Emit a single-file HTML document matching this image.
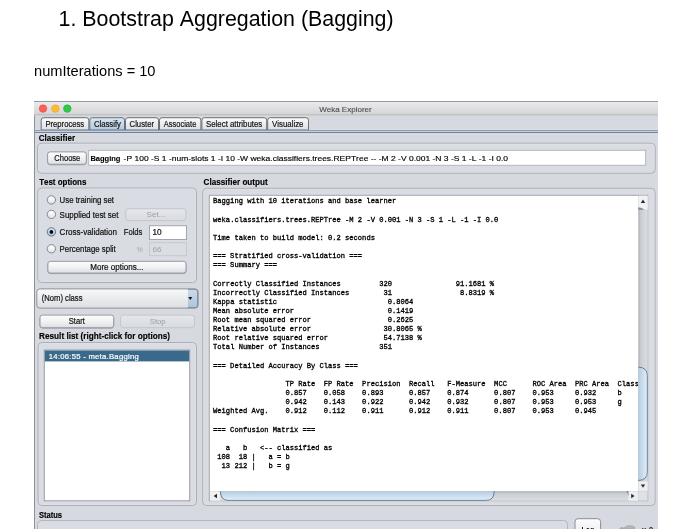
<!DOCTYPE html>
<html><head><meta charset="utf-8"><title>Bagging</title>
<style>html,body{margin:0;padding:0;background:#fff;width:690px;height:529px;overflow:hidden}</style>
</head><body>
<svg width="690" height="529" viewBox="0 0 690 529" style="display:block;will-change:transform;font-variant-ligatures:none;font-kerning:none"><defs>
<linearGradient id="gTitle" x1="0" y1="0" x2="0" y2="1"><stop offset="0" stop-color="#ececec"/><stop offset="1" stop-color="#d3d3d3"/></linearGradient>
<linearGradient id="gTab" x1="0" y1="0" x2="0" y2="1"><stop offset="0" stop-color="#fbfbfb"/><stop offset="1" stop-color="#dedfe2"/></linearGradient>
<linearGradient id="gTabSel" x1="0" y1="0" x2="0" y2="1"><stop offset="0" stop-color="#dbe6f0"/><stop offset="1" stop-color="#b5c9dc"/></linearGradient>
<linearGradient id="gBtn" x1="0" y1="0" x2="0" y2="1"><stop offset="0" stop-color="#fdfdfd"/><stop offset="0.5" stop-color="#f1f2f4"/><stop offset="1" stop-color="#dcdee2"/></linearGradient>
<linearGradient id="gBtnDis" x1="0" y1="0" x2="0" y2="1"><stop offset="0" stop-color="#e4e6ea"/><stop offset="1" stop-color="#d8dbe0"/></linearGradient>
<linearGradient id="gCombo" x1="0" y1="0" x2="0" y2="1"><stop offset="0" stop-color="#f9f9fa"/><stop offset="1" stop-color="#dcdee3"/></linearGradient>
<linearGradient id="gComboBtn" x1="0" y1="0" x2="0" y2="1"><stop offset="0" stop-color="#cbdbea"/><stop offset="1" stop-color="#adc4da"/></linearGradient>
<linearGradient id="gBlueLine" x1="0" y1="0" x2="0" y2="1"><stop offset="0" stop-color="#b8cadb"/><stop offset="0.45" stop-color="#a2b6ca"/><stop offset="0.6" stop-color="#7d90a5"/><stop offset="1" stop-color="#6b7d92"/></linearGradient>
<linearGradient id="gVTrack" x1="0" y1="0" x2="1" y2="0"><stop offset="0" stop-color="#a9acb2"/><stop offset="0.25" stop-color="#c9ccd1"/><stop offset="1" stop-color="#dcdee2"/></linearGradient>
<linearGradient id="gHTrack" x1="0" y1="0" x2="0" y2="1"><stop offset="0" stop-color="#a9acb2"/><stop offset="0.25" stop-color="#c9ccd1"/><stop offset="1" stop-color="#dcdee2"/></linearGradient>
<linearGradient id="gVThumb" x1="0" y1="0" x2="1" y2="0"><stop offset="0" stop-color="#b4cbe1"/><stop offset="1" stop-color="#e3f1fa"/></linearGradient>
<linearGradient id="gHThumb" x1="0" y1="0" x2="0" y2="1"><stop offset="0" stop-color="#b4cbe1"/><stop offset="1" stop-color="#e3f1fa"/></linearGradient>
<radialGradient id="gRadio" cx="0.5" cy="0.3" r="0.7"><stop offset="0" stop-color="#ffffff"/><stop offset="1" stop-color="#dcdee2"/></radialGradient>
<radialGradient id="gRadioSel" cx="0.5" cy="0.3" r="0.7"><stop offset="0" stop-color="#e6eff7"/><stop offset="1" stop-color="#9fb8d0"/></radialGradient>
</defs><text x="58.6" y="25.9" font-family="Liberation Sans" font-size="21.4" font-weight="normal" fill="#000" textLength="335.00" lengthAdjust="spacingAndGlyphs" style="font-variant-ligatures:none" >1. Bootstrap Aggregation (Bagging)</text>
<text x="34.0" y="75.9" font-family="Liberation Sans" font-size="14.6" font-weight="normal" fill="#000" textLength="121.50" lengthAdjust="spacingAndGlyphs" style="font-variant-ligatures:none" >numIterations = 10</text>
<rect x="34" y="101" width="624" height="428" rx="0" fill="#d6d9df" />
<line x1="34.5" y1="101" x2="34.5" y2="529" stroke="#8d9096" stroke-width="1"/>
<rect x="34" y="101" width="624" height="14.3" rx="0" fill="url(#gTitle)" />
<line x1="34" y1="101.5" x2="658" y2="101.5" stroke="#8e9bab" stroke-width="1"/>
<line x1="34" y1="114.8" x2="658" y2="114.8" stroke="#b9bbbf" stroke-width="1"/>
<circle cx="43" cy="108.6" r="3.8" fill="#fc5f57" stroke="#e0443e" stroke-width="0.5"/>
<circle cx="55.4" cy="108.6" r="3.8" fill="#fdbb2f" stroke="#dea123" stroke-width="0.5"/>
<circle cx="67.3" cy="108.6" r="3.8" fill="#33c748" stroke="#1aab29" stroke-width="0.5"/>
<text x="319.2" y="111.9" font-family="Liberation Sans" font-size="8.0" font-weight="normal" fill="#4a4a4a" textLength="52.50" lengthAdjust="spacingAndGlyphs" style="font-variant-ligatures:none" stroke="#4a4a4a" stroke-width="0.1">Weka Explorer</text>
<rect x="35" y="129" width="623" height="1" rx="0" fill="#dcdee2" />
<path d="M41.2,130 L41.2,120.2 Q41.2,117.7 43.7,117.7 L86.3,117.7 Q88.8,117.7 88.8,120.2 L88.8,130 Z" fill="url(#gTab)" stroke="#6c6f75" stroke-width="1"/>
<text x="45.400000000000006" y="127.0" font-family="Liberation Sans" font-size="8.4" font-weight="normal" fill="#111" textLength="38.80" lengthAdjust="spacingAndGlyphs" style="font-variant-ligatures:none" stroke="#111" stroke-width="0.18">Preprocess</text>
<path d="M89.8,130 L89.8,120.2 Q89.8,117.7 92.3,117.7 L122.0,117.7 Q124.5,117.7 124.5,120.2 L124.5,130 Z" fill="url(#gTabSel)" stroke="#5f7388" stroke-width="1"/>
<text x="93.9" y="127.0" font-family="Liberation Sans" font-size="8.4" font-weight="normal" fill="#111" textLength="27.10" lengthAdjust="spacingAndGlyphs" style="font-variant-ligatures:none" stroke="#111" stroke-width="0.18">Classify</text>
<path d="M125.5,130 L125.5,120.2 Q125.5,117.7 128.0,117.7 L156.0,117.7 Q158.5,117.7 158.5,120.2 L158.5,130 Z" fill="url(#gTab)" stroke="#6c6f75" stroke-width="1"/>
<text x="129.6" y="127.0" font-family="Liberation Sans" font-size="8.4" font-weight="normal" fill="#111" textLength="24.40" lengthAdjust="spacingAndGlyphs" style="font-variant-ligatures:none" stroke="#111" stroke-width="0.18">Cluster</text>
<path d="M159.5,130 L159.5,120.2 Q159.5,117.7 162.0,117.7 L198.4,117.7 Q200.9,117.7 200.9,120.2 L200.9,130 Z" fill="url(#gTab)" stroke="#6c6f75" stroke-width="1"/>
<text x="163.79999999999998" y="127.0" font-family="Liberation Sans" font-size="8.4" font-weight="normal" fill="#111" textLength="32.50" lengthAdjust="spacingAndGlyphs" style="font-variant-ligatures:none" stroke="#111" stroke-width="0.18">Associate</text>
<path d="M201.9,130 L201.9,120.2 Q201.9,117.7 204.4,117.7 L264.2,117.7 Q266.7,117.7 266.7,120.2 L266.7,130 Z" fill="url(#gTab)" stroke="#6c6f75" stroke-width="1"/>
<text x="206.0" y="127.0" font-family="Liberation Sans" font-size="8.4" font-weight="normal" fill="#111" textLength="56.30" lengthAdjust="spacingAndGlyphs" style="font-variant-ligatures:none" stroke="#111" stroke-width="0.18">Select attributes</text>
<path d="M267.7,130 L267.7,120.2 Q267.7,117.7 270.2,117.7 L306.0,117.7 Q308.5,117.7 308.5,120.2 L308.5,130 Z" fill="url(#gTab)" stroke="#6c6f75" stroke-width="1"/>
<text x="272.09999999999997" y="127.0" font-family="Liberation Sans" font-size="8.4" font-weight="normal" fill="#111" textLength="31.40" lengthAdjust="spacingAndGlyphs" style="font-variant-ligatures:none" stroke="#111" stroke-width="0.18">Visualize</text>
<rect x="35" y="130" width="623" height="1" rx="0" fill="#8f9daf" />
<rect x="35" y="131" width="623" height="1" rx="0" fill="#bcd1e3" />
<rect x="35" y="132" width="623" height="1.3" rx="0" fill="#778396" />
<rect x="35" y="133.3" width="623" height="1" rx="0" fill="#e1e3e7" />
<text x="38.8" y="140.9" font-family="Liberation Sans" font-size="8.7" font-weight="bold" fill="#000" textLength="36.30" lengthAdjust="spacingAndGlyphs" style="font-variant-ligatures:none" stroke="#000" stroke-width="0.15">Classifier</text>
<rect x="37.5" y="143.2" width="617.7" height="30.0" rx="4" fill="#d9dce2" stroke="#acafb5" stroke-width="1"/>
<rect x="38.5" y="144.2" width="615.7" height="28.0" rx="3" fill="none" stroke="#e6e8ec" stroke-width="1" opacity="0.35"/>
<rect x="47.6" y="152.4" width="38.699999999999996" height="12.400000000000006" rx="2.5" fill="none" stroke="#7e8186" stroke-width="1" opacity="0.6"/>
<rect x="47.6" y="151.9" width="38.699999999999996" height="12.400000000000006" rx="2.5" fill="url(#gBtn)" stroke="#979aa0" stroke-width="1"/>
<text x="54.300000000000004" y="160.7" font-family="Liberation Sans" font-size="8.3" font-weight="normal" fill="#111" textLength="26.00" lengthAdjust="spacingAndGlyphs" style="font-variant-ligatures:none" stroke="#111" stroke-width="0.2">Choose</text>
<rect x="88.7" y="150.3" width="557" height="15" fill="#fff" stroke="#b4b7bd" stroke-width="1"/>
<text x="90.4" y="160.6" font-family="Liberation Sans" font-size="7.9" font-weight="bold" fill="#000" textLength="30.00" lengthAdjust="spacingAndGlyphs" style="font-variant-ligatures:none" stroke="#000" stroke-width="0.1">Bagging</text>
<text x="123.6" y="160.5" font-family="Liberation Sans" font-size="7.8" font-weight="normal" fill="#000" textLength="384.40" lengthAdjust="spacingAndGlyphs" style="font-variant-ligatures:none" stroke="#000" stroke-width="0.15">-P 100 -S 1 -num-slots 1 -I 10 -W weka.classifiers.trees.REPTree -- -M 2 -V 0.001 -N 3 -S 1 -L -1 -I 0.0</text>
<text x="39.2" y="184.9" font-family="Liberation Sans" font-size="8.7" font-weight="bold" fill="#000" textLength="47.20" lengthAdjust="spacingAndGlyphs" style="font-variant-ligatures:none" stroke="#000" stroke-width="0.15">Test options</text>
<rect x="37.8" y="188.0" width="158.7" height="94.5" rx="4" fill="#d9dce2" stroke="#acafb5" stroke-width="1"/>
<rect x="38.8" y="189.0" width="156.7" height="92.5" rx="3" fill="none" stroke="#e6e8ec" stroke-width="1" opacity="0.35"/>
<circle cx="51.4" cy="199.9" r="4.2" fill="url(#gRadio)" stroke="#73767c" stroke-width="0.8"/>
<text x="59.6" y="203.0" font-family="Liberation Sans" font-size="8.3" font-weight="normal" fill="#111" textLength="54.40" lengthAdjust="spacingAndGlyphs" style="font-variant-ligatures:none" stroke="#111" stroke-width="0.2">Use training set</text>
<circle cx="51.4" cy="214.4" r="4.2" fill="url(#gRadio)" stroke="#73767c" stroke-width="0.8"/>
<text x="59.6" y="217.5" font-family="Liberation Sans" font-size="8.3" font-weight="normal" fill="#111" textLength="58.80" lengthAdjust="spacingAndGlyphs" style="font-variant-ligatures:none" stroke="#111" stroke-width="0.2">Supplied test set</text>
<rect x="125.7" y="208.7" width="60.3" height="12.0" rx="3" fill="url(#gBtnDis)" stroke="#c3c6cc" stroke-width="1"/>
<text x="146.6" y="217.3" font-family="Liberation Sans" font-size="7.8" font-weight="normal" fill="#9a9ca1" textLength="18.80" lengthAdjust="spacingAndGlyphs" style="font-variant-ligatures:none" >Set...</text>
<circle cx="51.4" cy="231.9" r="4.2" fill="url(#gRadioSel)" stroke="#4e647b" stroke-width="0.8"/>
<circle cx="51.4" cy="231.9" r="1.85" fill="#050505"/>
<text x="59.6" y="235.2" font-family="Liberation Sans" font-size="8.3" font-weight="normal" fill="#111" textLength="57.40" lengthAdjust="spacingAndGlyphs" style="font-variant-ligatures:none" stroke="#111" stroke-width="0.2">Cross-validation</text>
<text x="123.8" y="235.2" font-family="Liberation Sans" font-size="8.3" font-weight="normal" fill="#111" textLength="18.60" lengthAdjust="spacingAndGlyphs" style="font-variant-ligatures:none" stroke="#111" stroke-width="0.2">Folds</text>
<rect x="149.5" y="225.7" width="37" height="13.8" fill="#fff" stroke="#a3a6ac" stroke-width="1"/>
<text x="152.4" y="235.2" font-family="Liberation Sans" font-size="8.2" font-weight="normal" fill="#111" style="font-variant-ligatures:none" stroke="#111" stroke-width="0.2">10</text>
<circle cx="51.4" cy="248.8" r="4.2" fill="url(#gRadio)" stroke="#73767c" stroke-width="0.8"/>
<text x="59.6" y="251.6" font-family="Liberation Sans" font-size="8.3" font-weight="normal" fill="#111" textLength="56.20" lengthAdjust="spacingAndGlyphs" style="font-variant-ligatures:none" stroke="#111" stroke-width="0.2">Percentage split</text>
<text x="136.8" y="251.6" font-family="Liberation Sans" font-size="7.8" font-weight="normal" fill="#a2a4a8" textLength="6.00" lengthAdjust="spacingAndGlyphs" style="font-variant-ligatures:none" >%</text>
<rect x="149.5" y="242.6" width="37" height="13.1" fill="#dadde2" stroke="#c6c9ce" stroke-width="1"/>
<text x="152.4" y="251.6" font-family="Liberation Sans" font-size="7.8" font-weight="normal" fill="#a2a4a8" textLength="9.00" lengthAdjust="spacingAndGlyphs" style="font-variant-ligatures:none" >66</text>
<rect x="47.9" y="261.8" width="138.1" height="11.800000000000011" rx="2.5" fill="none" stroke="#7e8186" stroke-width="1" opacity="0.6"/>
<rect x="47.9" y="261.3" width="138.1" height="11.800000000000011" rx="2.5" fill="url(#gBtn)" stroke="#979aa0" stroke-width="1"/>
<text x="90.2" y="269.6" font-family="Liberation Sans" font-size="8.3" font-weight="normal" fill="#111" textLength="53.30" lengthAdjust="spacingAndGlyphs" style="font-variant-ligatures:none" stroke="#111" stroke-width="0.2">More options...</text>
<rect x="36.8" y="288.9" width="161.3" height="19.2" rx="3" fill="url(#gCombo)" stroke="#8f9298" stroke-width="1"/>
<path d="M187.9,289.4 L195.1,289.4 Q197.6,289.4 197.6,291.9 L197.6,305.6 Q197.6,307.6 195.1,307.6 L187.9,307.6 Z" fill="url(#gComboBtn)"/>
<path d="M187.9,289.4 L195.1,289.4 Q197.6,289.4 197.6,291.9 L197.6,305.6 Q197.6,307.6 195.1,307.6 L187.9,307.6" fill="none" stroke="#6f7d8c" stroke-width="0.8"/>
<path d="M188.3,297.0 L192.3,297.0 L190.3,299.9 Z" fill="#111"/>
<text x="41.7" y="300.9" font-family="Liberation Sans" font-size="8.3" font-weight="normal" fill="#111" textLength="40.80" lengthAdjust="spacingAndGlyphs" style="font-variant-ligatures:none" stroke="#111" stroke-width="0.2">(Nom) class</text>
<rect x="40.0" y="315.6" width="73.7" height="12.599999999999966" rx="2.5" fill="none" stroke="#7e8186" stroke-width="1" opacity="0.6"/>
<rect x="40.0" y="315.1" width="73.7" height="12.599999999999966" rx="2.5" fill="url(#gBtn)" stroke="#979aa0" stroke-width="1"/>
<text x="68.7" y="323.9" font-family="Liberation Sans" font-size="8.3" font-weight="normal" fill="#111" textLength="16.10" lengthAdjust="spacingAndGlyphs" style="font-variant-ligatures:none" stroke="#111" stroke-width="0.2">Start</text>
<rect x="120.5" y="315.1" width="74.0" height="12.599999999999966" rx="3" fill="url(#gBtnDis)" stroke="#c3c6cc" stroke-width="1"/>
<text x="149.79999999999998" y="323.9" font-family="Liberation Sans" font-size="7.8" font-weight="normal" fill="#9a9ca1" textLength="15.70" lengthAdjust="spacingAndGlyphs" style="font-variant-ligatures:none" >Stop</text>
<text x="39.1" y="339.1" font-family="Liberation Sans" font-size="8.7" font-weight="bold" fill="#000" textLength="131.00" lengthAdjust="spacingAndGlyphs" style="font-variant-ligatures:none" stroke="#000" stroke-width="0.15">Result list (right-click for options)</text>
<rect x="38.1" y="342.5" width="158.4" height="163.0" rx="4" fill="#d9dce2" stroke="#acafb5" stroke-width="1"/>
<rect x="39.1" y="343.5" width="156.4" height="161.0" rx="3" fill="none" stroke="#e6e8ec" stroke-width="1" opacity="0.35"/>
<rect x="44.3" y="350.0" width="145.4" height="150.8" fill="#fff" stroke="#9a9da3" stroke-width="1"/>
<rect x="44.8" y="350.5" width="144.4" height="10.9" rx="0" fill="#3a6a8b" />
<text x="48.7" y="358.9" font-family="Liberation Sans" font-size="7.7" font-weight="normal" fill="#fff" textLength="90.10" lengthAdjust="spacing" style="font-variant-ligatures:none" stroke="#fff" stroke-width="0.2">14:06:55 - meta.Bagging</text>
<text x="203.5" y="185.0" font-family="Liberation Sans" font-size="8.7" font-weight="bold" fill="#000" textLength="64.20" lengthAdjust="spacingAndGlyphs" style="font-variant-ligatures:none" stroke="#000" stroke-width="0.15">Classifier output</text>
<rect x="202.7" y="188.3" width="452.40000000000003" height="317.2" rx="4" fill="#d9dce2" stroke="#acafb5" stroke-width="1"/>
<rect x="203.7" y="189.3" width="450.40000000000003" height="315.2" rx="3" fill="none" stroke="#e6e8ec" stroke-width="1" opacity="0.35"/>
<rect x="209.3" y="195.3" width="438.4" height="305.4" fill="#fff" stroke="#a4a7ad" stroke-width="1"/>
<clipPath id="clipOut"><rect x="210" y="196" width="428.3" height="295"/></clipPath>
<g clip-path="url(#clipOut)" font-family="Liberation Mono" font-size="7.06" fill="#000" stroke="#000" stroke-width="0.3" style="white-space:pre">
<text x="213.1" y="203.40" textLength="183.09" lengthAdjust="spacingAndGlyphs" transform="translate(0 203.40) scale(1 1.08) translate(0 -203.40)">Bagging&#160;with&#160;10&#160;iterations&#160;and&#160;base&#160;learner</text>
<text x="213.1" y="221.66" textLength="285.29" lengthAdjust="spacingAndGlyphs" transform="translate(0 221.66) scale(1 1.08) translate(0 -221.66)">weka.classifiers.trees.REPTree&#160;-M&#160;2&#160;-V&#160;0.001&#160;-N&#160;3&#160;-S&#160;1&#160;-L&#160;-1&#160;-I&#160;0.0</text>
<text x="213.1" y="239.92" textLength="161.80" lengthAdjust="spacingAndGlyphs" transform="translate(0 239.92) scale(1 1.08) translate(0 -239.92)">Time&#160;taken&#160;to&#160;build&#160;model:&#160;0.2&#160;seconds</text>
<text x="213.1" y="258.18" textLength="149.03" lengthAdjust="spacingAndGlyphs" transform="translate(0 258.18) scale(1 1.08) translate(0 -258.18)">===&#160;Stratified&#160;cross-validation&#160;===</text>
<text x="213.1" y="267.31" textLength="63.87" lengthAdjust="spacingAndGlyphs" transform="translate(0 267.31) scale(1 1.08) translate(0 -267.31)">===&#160;Summary&#160;===</text>
<text x="213.1" y="285.57" textLength="281.03" lengthAdjust="spacingAndGlyphs" transform="translate(0 285.57) scale(1 1.08) translate(0 -285.57)">Correctly&#160;Classified&#160;Instances&#160;&#160;&#160;&#160;&#160;&#160;&#160;&#160;&#160;320&#160;&#160;&#160;&#160;&#160;&#160;&#160;&#160;&#160;&#160;&#160;&#160;&#160;&#160;&#160;91.1681&#160;%</text>
<text x="213.1" y="294.70" textLength="281.03" lengthAdjust="spacingAndGlyphs" transform="translate(0 294.70) scale(1 1.08) translate(0 -294.70)">Incorrectly&#160;Classified&#160;Instances&#160;&#160;&#160;&#160;&#160;&#160;&#160;&#160;31&#160;&#160;&#160;&#160;&#160;&#160;&#160;&#160;&#160;&#160;&#160;&#160;&#160;&#160;&#160;&#160;8.8319&#160;%</text>
<text x="213.1" y="303.83" textLength="200.13" lengthAdjust="spacingAndGlyphs" transform="translate(0 303.83) scale(1 1.08) translate(0 -303.83)">Kappa&#160;statistic&#160;&#160;&#160;&#160;&#160;&#160;&#160;&#160;&#160;&#160;&#160;&#160;&#160;&#160;&#160;&#160;&#160;&#160;&#160;&#160;&#160;&#160;&#160;&#160;&#160;&#160;0.8064</text>
<text x="213.1" y="312.96" textLength="200.13" lengthAdjust="spacingAndGlyphs" transform="translate(0 312.96) scale(1 1.08) translate(0 -312.96)">Mean&#160;absolute&#160;error&#160;&#160;&#160;&#160;&#160;&#160;&#160;&#160;&#160;&#160;&#160;&#160;&#160;&#160;&#160;&#160;&#160;&#160;&#160;&#160;&#160;&#160;0.1419</text>
<text x="213.1" y="322.09" textLength="200.13" lengthAdjust="spacingAndGlyphs" transform="translate(0 322.09) scale(1 1.08) translate(0 -322.09)">Root&#160;mean&#160;squared&#160;error&#160;&#160;&#160;&#160;&#160;&#160;&#160;&#160;&#160;&#160;&#160;&#160;&#160;&#160;&#160;&#160;&#160;&#160;0.2625</text>
<text x="213.1" y="331.22" textLength="208.64" lengthAdjust="spacingAndGlyphs" transform="translate(0 331.22) scale(1 1.08) translate(0 -331.22)">Relative&#160;absolute&#160;error&#160;&#160;&#160;&#160;&#160;&#160;&#160;&#160;&#160;&#160;&#160;&#160;&#160;&#160;&#160;&#160;&#160;30.8065&#160;%</text>
<text x="213.1" y="340.35" textLength="208.64" lengthAdjust="spacingAndGlyphs" transform="translate(0 340.35) scale(1 1.08) translate(0 -340.35)">Root&#160;relative&#160;squared&#160;error&#160;&#160;&#160;&#160;&#160;&#160;&#160;&#160;&#160;&#160;&#160;&#160;&#160;54.7138&#160;%</text>
<text x="213.1" y="349.48" textLength="178.84" lengthAdjust="spacingAndGlyphs" transform="translate(0 349.48) scale(1 1.08) translate(0 -349.48)">Total&#160;Number&#160;of&#160;Instances&#160;&#160;&#160;&#160;&#160;&#160;&#160;&#160;&#160;&#160;&#160;&#160;&#160;&#160;351</text>
<text x="213.1" y="367.74" textLength="144.77" lengthAdjust="spacingAndGlyphs" transform="translate(0 367.74) scale(1 1.08) translate(0 -367.74)">===&#160;Detailed&#160;Accuracy&#160;By&#160;Class&#160;===</text>
<text x="213.1" y="386.00" textLength="425.80" lengthAdjust="spacingAndGlyphs" transform="translate(0 386.00) scale(1 1.08) translate(0 -386.00)">&#160;&#160;&#160;&#160;&#160;&#160;&#160;&#160;&#160;&#160;&#160;&#160;&#160;&#160;&#160;&#160;&#160;TP&#160;Rate&#160;&#160;FP&#160;Rate&#160;&#160;Precision&#160;&#160;Recall&#160;&#160;&#160;F-Measure&#160;&#160;MCC&#160;&#160;&#160;&#160;&#160;&#160;ROC&#160;Area&#160;&#160;PRC&#160;Area&#160;&#160;Class</text>
<text x="213.1" y="395.13" textLength="408.77" lengthAdjust="spacingAndGlyphs" transform="translate(0 395.13) scale(1 1.08) translate(0 -395.13)">&#160;&#160;&#160;&#160;&#160;&#160;&#160;&#160;&#160;&#160;&#160;&#160;&#160;&#160;&#160;&#160;&#160;0.857&#160;&#160;&#160;&#160;0.058&#160;&#160;&#160;&#160;0.893&#160;&#160;&#160;&#160;&#160;&#160;0.857&#160;&#160;&#160;&#160;0.874&#160;&#160;&#160;&#160;&#160;&#160;0.807&#160;&#160;&#160;&#160;0.953&#160;&#160;&#160;&#160;&#160;0.932&#160;&#160;&#160;&#160;&#160;b</text>
<text x="213.1" y="404.26" textLength="408.77" lengthAdjust="spacingAndGlyphs" transform="translate(0 404.26) scale(1 1.08) translate(0 -404.26)">&#160;&#160;&#160;&#160;&#160;&#160;&#160;&#160;&#160;&#160;&#160;&#160;&#160;&#160;&#160;&#160;&#160;0.942&#160;&#160;&#160;&#160;0.143&#160;&#160;&#160;&#160;0.922&#160;&#160;&#160;&#160;&#160;&#160;0.942&#160;&#160;&#160;&#160;0.932&#160;&#160;&#160;&#160;&#160;&#160;0.807&#160;&#160;&#160;&#160;0.953&#160;&#160;&#160;&#160;&#160;0.953&#160;&#160;&#160;&#160;&#160;g</text>
<text x="213.1" y="413.39" textLength="383.22" lengthAdjust="spacingAndGlyphs" transform="translate(0 413.39) scale(1 1.08) translate(0 -413.39)">Weighted&#160;Avg.&#160;&#160;&#160;&#160;0.912&#160;&#160;&#160;&#160;0.112&#160;&#160;&#160;&#160;0.911&#160;&#160;&#160;&#160;&#160;&#160;0.912&#160;&#160;&#160;&#160;0.911&#160;&#160;&#160;&#160;&#160;&#160;0.807&#160;&#160;&#160;&#160;0.953&#160;&#160;&#160;&#160;&#160;0.945</text>
<text x="213.1" y="431.65" textLength="102.19" lengthAdjust="spacingAndGlyphs" transform="translate(0 431.65) scale(1 1.08) translate(0 -431.65)">===&#160;Confusion&#160;Matrix&#160;===</text>
<text x="213.1" y="449.91" textLength="119.22" lengthAdjust="spacingAndGlyphs" transform="translate(0 449.91) scale(1 1.08) translate(0 -449.91)">&#160;&#160;&#160;a&#160;&#160;&#160;b&#160;&#160;&#160;&lt;--&#160;classified&#160;as</text>
<text x="213.1" y="459.04" textLength="76.64" lengthAdjust="spacingAndGlyphs" transform="translate(0 459.04) scale(1 1.08) translate(0 -459.04)">&#160;108&#160;&#160;18&#160;|&#160;&#160;&#160;a&#160;=&#160;b</text>
<text x="213.1" y="468.17" textLength="76.64" lengthAdjust="spacingAndGlyphs" transform="translate(0 468.17) scale(1 1.08) translate(0 -468.17)">&#160;&#160;13&#160;212&#160;|&#160;&#160;&#160;b&#160;=&#160;g</text>
</g>
<rect x="638.3" y="195.8" width="9.3" height="295.4" rx="0" fill="url(#gVTrack)" />
<rect x="638.3" y="195.8" width="9.3" height="13.7" rx="0" fill="#f1f2f4" />
<path d="M640.8,202.9 L645.2,202.9 L643.0,199.5 Z" fill="#2a2a2a"/>
<path d="M638.3,207.2 Q642,207.4 644.5,209.8 L638.3,209.8 Z" fill="#5d6f82" opacity="0.8"/>
<path d="M638.3,367.1 Q647.6,367.5 647.6,375.5 L647.6,472 Q647.6,480.6 638.3,480.6 Z" fill="url(#gVThumb)"/>
<path d="M638.3,367.1 Q647.3,367.5 647.3,375.5 L647.3,472 Q647.3,480.4 638.3,480.4" fill="none" stroke="#4f6983" stroke-width="0.8"/>
<rect x="638.3" y="481.4" width="9.3" height="9.8" rx="0" fill="#eceef1" />
<path d="M640.8,484.4 L645.2,484.4 L643.0,487.8 Z" fill="#2a2a2a"/>
<rect x="210" y="491.2" width="428.3" height="9.5" rx="0" fill="url(#gHTrack)" />
<rect x="210" y="491.2" width="10.2" height="9.5" rx="0" fill="#eff0f2" />
<path d="M213.6,496.0 L217.0,493.8 L217.0,498.2 Z" fill="#2a2a2a"/>
<path d="M220.2,491.2 Q221,500.7 228,500.7 L486,500.7 Q494.2,500.7 494.2,491.2 Z" fill="url(#gHThumb)"/>
<path d="M220.2,491.2 Q221,500.4 228,500.4 L486,500.4 Q494.2,500.4 494.2,491.2" fill="none" stroke="#4f6983" stroke-width="0.8"/>
<rect x="628.4" y="491.2" width="9.9" height="9.5" rx="0" fill="#eceef1" />
<path d="M634.6,496.0 L631.2,493.8 L631.2,498.2 Z" fill="#2a2a2a"/>
<path d="M626.2,491.2 Q628.4,493 628.4,496 L628.4,491.2 Z" fill="#5d6f82" opacity="0.8"/>
<rect x="638.3" y="491.2" width="9.3" height="9.5" rx="0" fill="#dfe1e5" stroke="#c8cbd0" stroke-width="0.6" />
<text x="38.9" y="517.9" font-family="Liberation Sans" font-size="8.7" font-weight="bold" fill="#000" textLength="23.20" lengthAdjust="spacingAndGlyphs" style="font-variant-ligatures:none" stroke="#000" stroke-width="0.15">Status</text>
<rect x="37.5" y="520.5" width="530" height="20" rx="4" fill="#d9dce2" stroke="#b3b6bc" stroke-width="1"/>
<text x="47.6" y="533.5" font-family="Liberation Sans" font-size="8" font-weight="normal" fill="#9a9ca1" textLength="11.50" lengthAdjust="spacingAndGlyphs" style="font-variant-ligatures:none" >OK</text>
<rect x="575.0" y="518.7" width="25.6" height="20" rx="3" fill="url(#gBtn)" stroke="#8a8d92" stroke-width="1"/>
<text x="581.6" y="533.2" font-family="Liberation Sans" font-size="8.2" font-weight="bold" fill="#111" textLength="12.60" lengthAdjust="spacingAndGlyphs" style="font-variant-ligatures:none" >Log</text>
<path d="M619.5,529 L621,527.5 L624,528 Q627,525.2 630,525.8 Q633,525.6 634.6,527 L634.6,529 Z" fill="#b5b8bd" stroke="#8d9095" stroke-width="0.5"/>
<text x="641.8" y="532.6" font-family="Liberation Sans" font-size="8.4" font-weight="bold" fill="#333" textLength="11.60" lengthAdjust="spacingAndGlyphs" style="font-variant-ligatures:none" >x 0</text></svg>
</body></html>
